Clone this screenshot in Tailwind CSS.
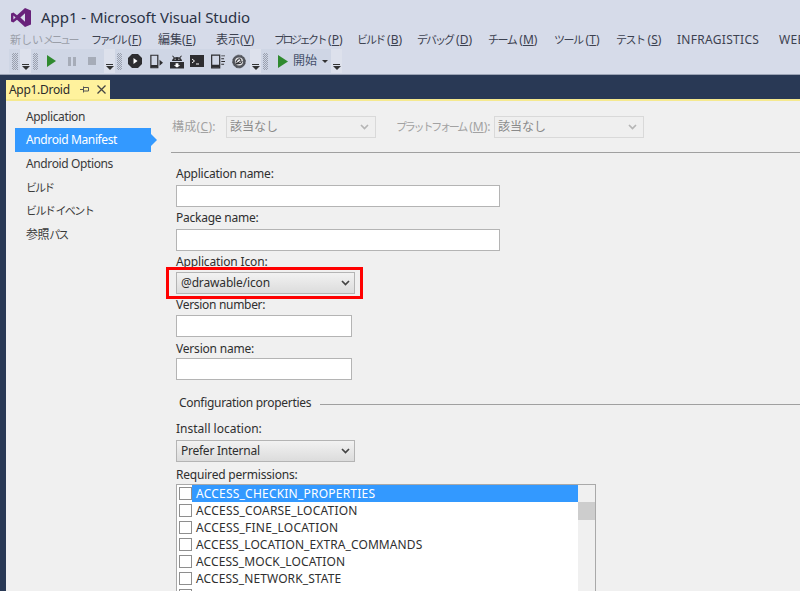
<!DOCTYPE html>
<html lang="ja">
<head>
<meta charset="utf-8">
<script src="https://cdn.jsdelivr.net/npm/@tailwindcss/browser@4"></script>
</head>
<body class="m-0">
<div class="w-[800px] h-[591px] overflow-hidden flex flex-col bg-[#293955] text-[12px] leading-[16px] text-[#333] font-['Noto_Sans','Noto_Sans_CJK_JP',sans-serif]">
  <!-- chrome -->
  <div class="h-[75px] shrink-0 bg-[#d6dbe9] border-b border-b-[#9ba3b5] flex flex-col">
    <div class="h-[30px] shrink-0 flex items-center pl-[11px] pt-[4px]">
      <svg class="w-[20px] h-[19px]" viewBox="0 0 20 19"><path fill="#68217a" d="M14 0 L20 2.5 V16.5 L14 19 L6 11.8 L2.4 14.6 L0 13.4 V5.6 L2.4 4.4 L6 7.2 Z M14 5.2 L9.4 9.5 L14 13.8 Z M2.4 7.4 V11.6 L4.6 9.5 Z"/></svg>
      <span class="ml-[10px] text-[15px] leading-[20px] tracking-[-0.04px] text-[#2a3245]">App1 - Microsoft Visual Studio</span>
    </div>
    <div class="h-[19px] shrink-0 flex items-center pl-[10px] whitespace-nowrap text-[#3c4150]">
      <span class="w-[81px] shrink-0 text-[#9a9ea8] text-[11px]"><span>新しい</span><span class="tracking-[-2.5px]">メニュー</span></span>
      <span class="w-[67px] shrink-0"><span class="text-[11px] tracking-[-2.5px]">ファイル</span>&nbsp;(<u>F</u>)</span>
      <span class="w-[58px] shrink-0">編集(<u>E</u>)</span>
      <span class="w-[58px] shrink-0">表示(<u>V</u>)</span>
      <span class="w-[83px] shrink-0"><span class="text-[11px] tracking-[-2.5px]">プロジェクト</span>&nbsp;(<u>P</u>)</span>
      <span class="w-[60px] shrink-0"><span class="text-[11px] tracking-[-2px]">ビルド</span>&nbsp;(<u>B</u>)</span>
      <span class="w-[71px] shrink-0"><span class="text-[11px] tracking-[-2px]">デバッグ</span>&nbsp;(<u>D</u>)</span>
      <span class="w-[66px] shrink-0"><span class="text-[11px] tracking-[-1.500px]">チーム</span>&nbsp;(<u>M</u>)</span>
      <span class="w-[62px] shrink-0"><span class="text-[11px] tracking-[-1.500px]">ツール</span>&nbsp;(<u>T</u>)</span>
      <span class="w-[61px] shrink-0"><span class="text-[11px] tracking-[-1.500px]">テスト</span>&nbsp;(<u>S</u>)</span>
      <span class="w-[102px] shrink-0 tracking-[0.3px]">INFRAGISTICS</span>
      <span class="shrink-0 tracking-[0.3px]">WEB</span>
    </div>
    <div class="h-[25px] shrink-0 flex items-stretch pl-[9px] pb-[1px]">
      <div class="w-[11px] bg-[#cfd6e5] flex items-center justify-center"><div class="w-[6px] h-[17px] bg-[conic-gradient(#9aa0ae_25%,transparent_0_50%,#9aa0ae_0_75%,transparent_0)] bg-[length:2px_2px]"></div></div>
      <div class="w-[11px] bg-[#dde1ec] flex flex-col items-center justify-end pb-[3px]"><div class="w-[7px] h-[1px] bg-[#333]"></div><div class="mt-[1px] w-0 h-0 border-x-[4px] border-x-transparent border-t-[4px] border-t-[#333]"></div></div>

      <div class="w-[73px] bg-[#cfd6e5] flex items-center pl-[2px]">
        <div class="w-[5px] h-[17px] bg-[conic-gradient(#9aa0ae_25%,transparent_0_50%,#9aa0ae_0_75%,transparent_0)] bg-[length:2px_2px]"></div>
        <svg class="ml-[9px] w-[9px] h-[12px]" viewBox="0 0 9 12"><path fill="#2f8a2f" d="M0 0 L9 6 L0 12Z"/></svg>
        <svg class="ml-[12px] w-[8px] h-[9px]" viewBox="0 0 8 9"><path fill="#a6acb8" d="M0 0H3V9H0ZM5 0H8V9H5Z"/></svg>
        <svg class="ml-[12px] w-[8px] h-[8px]" viewBox="0 0 8 8"><path fill="#a6acb8" d="M0 0H8V8H0Z"/></svg>
      </div>
      <div class="w-[11px] bg-[#dde1ec] flex flex-col items-center justify-end pb-[3px]"><div class="w-[7px] h-[1px] bg-[#333]"></div><div class="mt-[1px] w-0 h-0 border-x-[4px] border-x-transparent border-t-[4px] border-t-[#333]"></div></div>

      <div class="w-[135px] bg-[#cfd6e5] flex items-center pl-[2px]">
        <div class="w-[5px] h-[17px] bg-[conic-gradient(#9aa0ae_25%,transparent_0_50%,#9aa0ae_0_75%,transparent_0)] bg-[length:2px_2px]"></div>
        <svg class="ml-[6px] w-[14px] h-[14px]" viewBox="0 0 14 14"><path fill="#2d2d30" d="M4 0H10L14 4V10L10 14H4L0 10V4Z"/><path fill="#fff" d="M5.5 4 L9.5 7 L5.5 10Z"/></svg>
        <svg class="ml-[8px] w-[13px] h-[15px]" viewBox="0 0 15 16"><path fill="none" stroke="#2d2d30" stroke-width="1.4" d="M1 .8H9V15.2H1Z"/><path fill="#2d2d30" d="M1 12H9V15H1ZM11 6L15 9.500L11 13Z"/></svg>
        <svg class="ml-[7px] w-[14px] h-[15px]" viewBox="0 0 15 15"><path fill="#2d2d30" d="M3 1L5 3.2Q7.5 2.2 10 3.2L12 1L12.7 1.6L11 3.8Q12.5 5 13 7H2Q2.500 5 4 3.800L2.300 1.600ZM0 8H15V15H0Z"/><path fill="#fff" d="M5 4.500h1v1H5ZM9 4.500h1v1H9ZM6 9.500H9V11.500H11L7.500 14L4 11.500H6Z"/></svg>
        <svg class="ml-[6px] w-[14px] h-[12px]" viewBox="0 0 14 12"><path fill="#2d2d30" d="M0 0H14V12H0Z"/><path fill="none" stroke="#fff" d="M2 4L4.500 6L2 8M6 9H9"/></svg>
        <svg class="ml-[7px] w-[14px] h-[15px]" viewBox="0 0 15 15"><path fill="none" stroke="#2d2d30" stroke-width="1.300" d="M.7.7H9.300V14.300H.7Z"/><path fill="#2d2d30" d="M1 11H9V14H1ZM11 1H15V2H11ZM11 4H14V5H11ZM11 7H15V8H11ZM11 10H14V11H11Z"/></svg>
        <svg class="ml-[7px] w-[14px] h-[15px]" viewBox="0 0 15 15"><circle cx="7.500" cy="7.500" r="6.800" fill="#55585f" stroke="#2d2d30" stroke-dasharray="1 .6"/><circle cx="7.500" cy="7.500" r="4.300" fill="#e8e8ea"/><path fill="none" stroke="#2d2d30" stroke-width="1.100" d="M4 8.500Q7 3 9 5T6 9T9.500 9.500L11 7"/></svg>
      </div>
      <div class="w-[11px] bg-[#dde1ec] flex flex-col items-center justify-end pb-[3px]"><div class="w-[7px] h-[1px] bg-[#333]"></div><div class="mt-[1px] w-0 h-0 border-x-[4px] border-x-transparent border-t-[4px] border-t-[#333]"></div></div>

      <div class="w-[70px] bg-[#cfd6e5] flex items-center pl-[2px]">
        <div class="w-[5px] h-[17px] bg-[conic-gradient(#9aa0ae_25%,transparent_0_50%,#9aa0ae_0_75%,transparent_0)] bg-[length:2px_2px]"></div>
        <svg class="ml-[10px] w-[10px] h-[13px]" viewBox="0 0 10 13"><path fill="#2f8a2f" d="M0 0 L10 6.500 L0 13Z"/></svg>
        <span class="ml-[5px] text-[#44506b]">開始</span>
        <div class="ml-[5px] w-0 h-0 border-x-[3px] border-x-transparent border-t-[3px] border-t-[#333]"></div>
      </div>
      <div class="w-[11px] bg-[#dde1ec] flex flex-col items-center justify-end pb-[3px]"><div class="w-[7px] h-[1px] bg-[#333]"></div><div class="mt-[1px] w-0 h-0 border-x-[4px] border-x-transparent border-t-[4px] border-t-[#333]"></div></div>
    </div>
  </div>

  <!-- tab strip -->
  <div class="h-[24px] shrink-0 pl-[6px] flex items-end">
    <div class="w-[104px] h-[19px] bg-[#fff29d] flex items-center pl-[3px] text-[#2b2b2b]">
      <span class="w-[62px] tracking-[-0.3px]">App1.Droid</span>
      <svg class="ml-[9px] w-[9px] h-[7px]" viewBox="0 0 9 7"><path fill="none" stroke="#555" d="M0 3.500H3M3.500 .5V6.500M3.500 1.500H8.500V5H3.500"/></svg>
      <svg class="ml-[8px] w-[9px] h-[9px]" viewBox="0 0 9 9"><path fill="none" stroke="#444" stroke-width="1.300" d="M.5.5L8.500 8.500M8.500.5L.5 8.500"/></svg>
    </div>
  </div>

  <!-- document -->
  <div class="flex-1 ml-[6px] min-h-0 border-t-2 border-t-[#f5e98f] bg-[#f0f0f0] flex overflow-hidden">
    <!-- nav -->
    <nav class="w-[165px] shrink-0 pt-[4px] pl-[9px] text-[#3a3a3a] tracking-[-0.38px]">
      <div class="h-[23px] pl-[11px] flex items-center">Application</div>
      <div class="relative w-[136px] h-[24px] pl-[11px] flex items-center bg-[#3399ff] text-white">Android Manifest
        <div class="absolute left-[136px] top-[6px] w-0 h-0 border-y-[6px] border-y-transparent border-l-[6px] border-l-[#3399ff]"></div>
      </div>
      <div class="h-[24px] pl-[11px] flex items-center">Android Options</div>
      <div class="h-[23px] pl-[11px] flex items-center text-[11px] tracking-[-2px]">ビルド</div>
      <div class="h-[24px] pl-[11px] flex items-center text-[11px] tracking-[-1.600px] whitespace-pre">ビルド イベント</div>
      <div class="h-[23px] pl-[11px] flex items-center">参照<span class="text-[11px] tracking-[-2px]">パス</span></div>
    </nav>
    <!-- main -->
    <main class="flex-1 min-w-0 pt-[15px]">
      <div class="h-[22px] flex items-center pl-[1px] text-[#a2a2a2]">
        <span class="w-[54px] tracking-[0.3px]">構成(<u>C</u>):</span>
        <div class="w-[150px] h-[22px] border border-[#d9d9d9] bg-[#efefef] flex items-center justify-between px-[3px] text-[#8a8a8a]">該当なし
          <svg class="w-[9px] h-[6px] mr-[3px]" viewBox="0 0 9 6"><path fill="none" stroke="#b5b5b5" stroke-width="1.700" d="M1 1L4.500 4.500L8 1"/></svg>
        </div>
        <span class="ml-[20px] w-[98px] whitespace-nowrap"><span class="text-[11px] tracking-[-2.2px]">プラットフォーム</span>&nbsp;(<u>M</u>):</span>
        <div class="w-[150px] h-[22px] border border-[#d9d9d9] bg-[#efefef] flex items-center justify-between px-[3px] text-[#8a8a8a]">該当なし
          <svg class="w-[9px] h-[6px] mr-[3px]" viewBox="0 0 9 6"><path fill="none" stroke="#b5b5b5" stroke-width="1.700" d="M1 1L4.500 4.500L8 1"/></svg>
        </div>
      </div>
      <div class="mt-[14px] h-px bg-[#a0a0a0]"></div>

      <div class="pl-[5px] text-[#2f2f2f]">
        <div class="mt-[13px] h-[16px] tracking-[-0.24px]">Application name:</div>
        <div class="mt-[3px] w-[324px] h-[22px] bg-white border border-[#b4b4b4]"></div>
        <div class="mt-[3px] h-[16px] tracking-[-0.24px]">Package name:</div>
        <div class="mt-[3px] w-[324px] h-[22px] bg-white border border-[#b4b4b4]"></div>
        <div class="mt-[3px] h-[16px] tracking-[-0.15px]">Application Icon:</div>
        <div class="relative mt-[2px] w-[179px] h-[22px] bg-gradient-to-b from-[#f2f2f2] to-[#dcdcdc] border border-[#b4b4b4] flex items-center justify-between pl-[4px] pr-[3px]">
          <span class="tracking-[-0.15px]">@drawable/icon</span>
          <svg class="w-[9px] h-[6px] mr-[1px]" viewBox="0 0 9 6"><path fill="none" stroke="#444" stroke-width="1.700" d="M1 1L4.500 4.500L8 1"/></svg>
          <div class="absolute left-[-11px] top-[-6px] w-[197px] h-[32px] border-[3px] border-[#ff0000]"></div>
        </div>
        <div class="mt-[3px] h-[16px] tracking-[-0.3px]">Version number:</div>
        <div class="mt-[2px] w-[176px] h-[22px] bg-white border border-[#b4b4b4]"></div>
        <div class="mt-[4px] h-[16px] tracking-[-0.2px]">Version name:</div>
        <div class="mt-[1px] w-[176px] h-[22px] bg-white border border-[#b4b4b4]"></div>

        <div class="mt-[15px] h-[16px] flex items-center pl-[3px]">
          <span class="tracking-[-0.3px]">Configuration properties</span>
          <div class="flex-1 ml-[9px] mt-[2px] h-px bg-[#a0a0a0]"></div>
        </div>
        <div class="mt-[10px] h-[16px]">Install location:</div>
        <div class="mt-[3px] w-[179px] h-[22px] bg-gradient-to-b from-[#f2f2f2] to-[#dcdcdc] border border-[#b4b4b4] flex items-center justify-between pl-[4px] pr-[3px]">
          <span class="tracking-[-0.25px]">Prefer Internal</span>
          <svg class="w-[9px] h-[6px] mr-[1px]" viewBox="0 0 9 6"><path fill="none" stroke="#444" stroke-width="1.700" d="M1 1L4.500 4.500L8 1"/></svg>
        </div>
        <div class="mt-[5px] h-[16px] tracking-[-0.2px]">Required permissions:</div>
        <div class="mt-[1px] w-[420px] h-[120px] bg-white border border-[#a9a9a9] flex items-start tracking-[0.22px]">
          <div class="flex-1 min-w-0 pt-0">
            <div class="h-[17px] flex items-center pl-[2px]"><span class="w-[13px] h-[13px] border border-[#8e8e8e] bg-white shrink-0"></span><span class="pl-[4px] flex-1 h-[17px] leading-[17px] bg-[#3399ff] text-white">ACCESS_CHECKIN_PROPERTIES</span></div>
            <div class="h-[17px] flex items-center pl-[2px]"><span class="w-[13px] h-[13px] border border-[#8e8e8e] bg-white shrink-0"></span><span class="pl-[4px] flex-1">ACCESS_COARSE_LOCATION</span></div>
            <div class="h-[17px] flex items-center pl-[2px]"><span class="w-[13px] h-[13px] border border-[#8e8e8e] bg-white shrink-0"></span><span class="pl-[4px] flex-1">ACCESS_FINE_LOCATION</span></div>
            <div class="h-[17px] flex items-center pl-[2px]"><span class="w-[13px] h-[13px] border border-[#8e8e8e] bg-white shrink-0"></span><span class="pl-[4px] flex-1 tracking-[0.1px]">ACCESS_LOCATION_EXTRA_COMMANDS</span></div>
            <div class="h-[17px] flex items-center pl-[2px]"><span class="w-[13px] h-[13px] border border-[#8e8e8e] bg-white shrink-0"></span><span class="pl-[4px] flex-1 tracking-[0.1px]">ACCESS_MOCK_LOCATION</span></div>
            <div class="h-[17px] flex items-center pl-[2px]"><span class="w-[13px] h-[13px] border border-[#8e8e8e] bg-white shrink-0"></span><span class="pl-[4px] flex-1 tracking-[0.1px]">ACCESS_NETWORK_STATE</span></div>
            <div class="h-[17px] flex items-center pl-[2px]"><span class="w-[13px] h-[13px] border border-[#8e8e8e] bg-white shrink-0"></span></div>
          </div>
          <div class="w-[17px] self-stretch bg-[#f0f0f0] pt-[17px]">
            <div class="h-[18px] bg-[#cdcdcd]"></div>
          </div>
        </div>
      </div>
    </main>
  </div>
</div>
</body>
</html>
